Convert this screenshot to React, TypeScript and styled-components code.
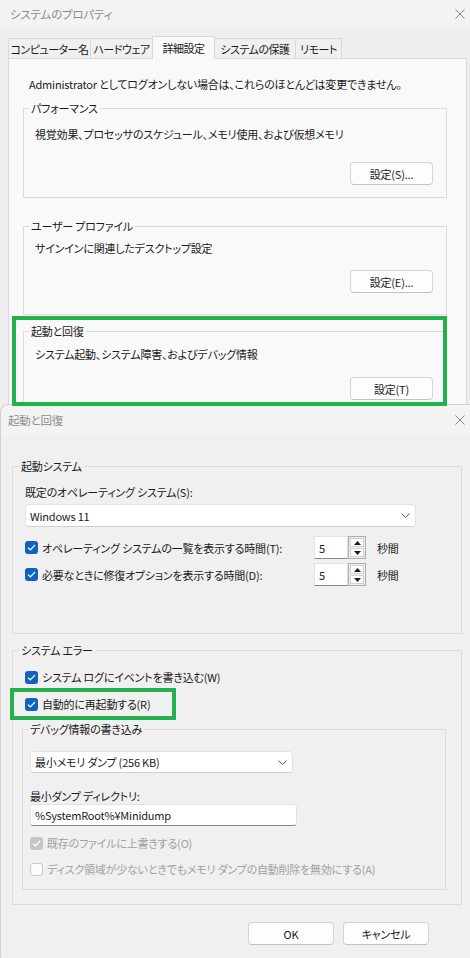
import React from 'react';
import styled, { createGlobalStyle, css } from 'styled-components';

const GREEN = '#22b14c';

const GlobalStyle = createGlobalStyle`
  html, body {
    margin: 0;
    padding: 0;
    background: #f0f0f0;
  }
  body {
    font-family: "Noto Sans CJK JP", "Noto Sans", sans-serif;
    font-size: 11px;
    letter-spacing: -0.2px;
    line-height: 16px;
    color: #1a1a1a;
    font-feature-settings: "palt";
  }
  *, *::before, *::after {
    box-sizing: border-box;
  }
`;

const Page = styled.div`
  width: 470px;
  height: 958px;
  overflow: hidden;
  display: flex;
  flex-direction: column;
`;

const Window = styled.section<{ $h: number; $framed?: boolean }>`
  flex: none;
  height: ${p => p.$h}px;
  background: #efefef;
  ${p =>
    p.$framed &&
    css`
      background: #f0f0f0;
      border-top: 1px solid #d2d2d2;
      border-left: 1px solid #d2d2d2;
      border-radius: 8px 0 0 8px;
      overflow: hidden;
    `}
`;

const TitleBar = styled.div<{ $h: number; $pl: number }>`
  height: ${p => p.$h}px;
  display: flex;
  align-items: center;
  justify-content: space-between;
  padding: 0 5px 0 ${p => p.$pl}px;
  background: #f3f3f3;
  color: #8c8c8c;
  font-size: 11.5px;
`;

const CloseIcon = () => (
  <svg width="10" height="10" viewBox="0 0 10 10">
    <path d="M0.5 0.5 L9.5 9.5 M9.5 0.5 L0.5 9.5" stroke="#8a8a8a" strokeWidth="1" fill="none" />
  </svg>
);

const TabStrip = styled.div`
  display: flex;
  align-items: flex-start;
  height: 22px;
  margin: 9px 0 0 8px;
`;

const Tab = styled.div<{ $active?: boolean; $w: number }>`
  position: relative;
  width: ${p => p.$w}px;
  height: ${p => (p.$active ? 23 : 20)}px;
  margin-top: ${p => (p.$active ? 0 : 2)}px;
  margin-left: -1px;
  &:first-child {
    margin-left: 0;
  }
  border: 1px solid #d9d9d9;
  border-bottom: none;
  background: ${p => (p.$active ? '#f9f9f9' : '#f0f0f0')};
  z-index: ${p => (p.$active ? 2 : 1)};
  display: flex;
  align-items: center;
  justify-content: center;
  white-space: nowrap;
  letter-spacing: -0.5px;
  padding-bottom: ${p => (p.$active ? 1 : 0)}px;
`;

const Panel = styled.div`
  margin-left: 8px;
  width: 459px;
  height: 370px;
  border: 1px solid #d9d9d9;
  background: #f9f9f9;
  padding-top: 17px;
`;

const Notice = styled.p`
  margin: 0;
  padding-left: 20px;
`;

const Group = styled.fieldset<{ $m: string }>`
  margin: ${p => p.$m};
  padding: 0;
  border: 1px solid #dcdcdc;
  min-width: 0;
`;

const Legend = styled.legend<{ $ml?: number }>`
  margin-left: ${p => p.$ml ?? 6}px;
  padding: 0 2px;
  line-height: 16px;
`;

const GroupBody = styled.div<{ $pad: string }>`
  padding: ${p => p.$pad};
  display: flex;
  flex-direction: column;
`;

const ButtonRow = styled.div<{ $mt: number }>`
  display: flex;
  justify-content: flex-end;
  margin-top: ${p => p.$mt}px;
`;

const PushButton = styled.button<{ $w: number }>`
  width: ${p => p.$w}px;
  height: 23px;
  padding: 0;
  font: inherit;
  letter-spacing: inherit;
  font-feature-settings: "palt";
  color: #1a1a1a;
  background: #fdfdfd;
  border: 1px solid #d4d4d4;
  border-bottom-color: #c2c2c2;
  border-radius: 4px;
`;

const Highlight = styled.div<{ $top: number; $left: number; $w: number; $h: number; $mt?: number }>`
  position: relative;
  margin-top: ${p => p.$mt ?? 0}px;
  &::after {
    content: '';
    position: absolute;
    top: ${p => p.$top}px;
    left: ${p => p.$left}px;
    width: ${p => p.$w}px;
    height: ${p => p.$h}px;
    border: 4px solid ${GREEN};
    pointer-events: none;
  }
`;

const DialogBody = styled.div`
  padding-top: 23px;
  display: flex;
  flex-direction: column;
`;

const FieldLabel = styled.div<{ $mt?: number }>`
  margin-top: ${p => p.$mt ?? 0}px;
`;

const Select = styled.div<{ $w: number; $h: number; $mt: number }>`
  width: ${p => p.$w}px;
  height: ${p => p.$h}px;
  margin-top: ${p => p.$mt}px;
  background: #fff;
  border: 1px solid #e3e3e3;
  border-bottom-color: #d0d0d0;
  border-radius: 4px;
  display: flex;
  align-items: center;
  justify-content: space-between;
  padding: 0 5px 0 4px;
`;

const Chevron = () => (
  <svg width="9" height="5" viewBox="0 0 9 5">
    <path d="M0.5 0.5 L4.5 4.5 L8.5 0.5" stroke="#5f5f5f" strokeWidth="1" fill="none" />
  </svg>
);

const TextInput = styled.div<{ $w: number }>`
  width: ${p => p.$w}px;
  height: 22px;
  background: #fff;
  border: 1px solid #e3e3e3;
  border-bottom-color: #868686;
  border-radius: 3px;
  padding-left: 4px;
  display: flex;
  align-items: center;
`;

const CheckRow = styled.div<{ $mt?: number; $ml?: number; $disabled?: boolean }>`
  display: flex;
  align-items: center;
  gap: 4px;
  height: 16px;
  margin-top: ${p => p.$mt ?? 0}px;
  margin-left: ${p => p.$ml ?? 0}px;
  color: ${p => (p.$disabled ? '#a0a0a0' : '#1a1a1a')};
`;

const Box = styled.span<{ $checked?: boolean; $disabled?: boolean }>`
  flex: none;
  width: 13px;
  height: 13px;
  border-radius: 3px;
  display: inline-flex;
  align-items: center;
  justify-content: center;
  ${p =>
    p.$checked
      ? css`
          background: ${p.$disabled ? '#c6c6c6' : '#0f62be'};
        `
      : css`
          background: #fbfbfb;
          border: 1px solid #c9c9c9;
        `}
`;

const Check = ({ checked, disabled }: { checked?: boolean; disabled?: boolean }) => (
  <Box $checked={checked} $disabled={disabled}>
    {checked && (
      <svg width="9" height="7" viewBox="0 0 9 7">
        <path d="M1 3.6 L3.3 5.8 L8 1" stroke="#fff" strokeWidth="1.2" fill="none" />
      </svg>
    )}
  </Box>
);

const TimeRow = styled.div<{ $mt: number }>`
  display: flex;
  align-items: center;
  height: 23px;
  margin-top: ${p => p.$mt}px;
`;

const TimeLabel = styled.div`
  width: 289px;
  display: flex;
  align-items: center;
  gap: 4px;
`;

const Spin = styled.div`
  display: flex;
  height: 23px;
`;

const SpinInput = styled.div`
  width: 34px;
  background: #fff;
  border: 1px solid #e3e3e3;
  border-bottom-color: #8b8b8b;
  padding-left: 4px;
  display: flex;
  align-items: center;
`;

const SpinButtons = styled.div`
  width: 18px;
  display: flex;
  flex-direction: column;
  gap: 1px;
  padding: 1px;
  border: 1px solid #acacac;
  background: #f0f0f0;
`;

const SpinButton = styled.div`
  flex: 1;
  display: flex;
  align-items: center;
  justify-content: center;
  background: #fdfdfd;
  border: 1px solid #d0d0d0;
`;

const Arrow = ({ up }: { up?: boolean }) => (
  <svg width="7" height="4" viewBox="0 0 7 4">
    <path d={up ? 'M0 4 L3.5 0 L7 4 Z' : 'M0 0 L7 0 L3.5 4 Z'} fill="#1a1a1a" />
  </svg>
);

const Unit = styled.span`
  margin-left: 11px;
`;

const Footer = styled.div`
  display: flex;
  justify-content: flex-end;
  gap: 9px;
  margin-top: 17px;
  padding-right: 41px;
`;

const Spinner = () => (
  <Spin>
    <SpinInput>5</SpinInput>
    <SpinButtons>
      <SpinButton>
        <Arrow up />
      </SpinButton>
      <SpinButton>
        <Arrow />
      </SpinButton>
    </SpinButtons>
  </Spin>
);

interface SettingProps {
  title: string;
  desc: string;
  button: string;
  margin: string;
  pt: number;
  gap: number;
  pb: number;
}

const SettingGroup = ({ title, desc, button, margin, pt, gap, pb }: SettingProps) => (
  <Group $m={margin}>
    <Legend $ml={5}>{title}</Legend>
    <GroupBody $pad={`${pt}px 13px ${pb}px 11px`}>
      <div>{desc}</div>
      <ButtonRow $mt={gap}>
        <PushButton $w={83}>{button}</PushButton>
      </ButtonRow>
    </GroupBody>
  </Group>
);

const App = () => {
  return (
    <Page>
      <GlobalStyle />
      <Window $h={404}>
        <TitleBar $h={27} $pl={10}>
          <span>システムのプロパティ</span>
          <CloseIcon />
        </TitleBar>
        <TabStrip>
          <Tab $w={83}>コンピューター名</Tab>
          <Tab $w={63}>ハードウェア</Tab>
          <Tab $w={63} $active>
            詳細設定
          </Tab>
          <Tab $w={82}>システムの保護</Tab>
          <Tab $w={47}>リモート</Tab>
        </TabStrip>
        <Panel>
          <Notice>Administrator としてログオンしない場合は、これらのほとんどは変更できません。</Notice>
          <SettingGroup
            title="パフォーマンス"
            desc="視覚効果、プロセッサのスケジュール、メモリ使用、および仮想メモリ"
            button="設定(S)..."
            margin="8px 19px 0 14px"
            pt={10}
            gap={20}
            pb={12}
          />
          <SettingGroup
            title="ユーザー プロファイル"
            desc="サインインに関連したデスクトップ設定"
            button="設定(E)..."
            margin="20px 19px 0 14px"
            pt={6}
            gap={14}
            pb={21}
          />
          <Highlight $mt={8} $top={-7} $left={3} $w={435} $h={90}>
            <SettingGroup
              title="起動と回復"
              desc="システム起動、システム障害、およびデバッグ情報"
              button="設定(T)"
              margin="0 19px 0 14px"
              pt={7}
              gap={15}
              pb={2}
            />
          </Highlight>
        </Panel>
      </Window>

      <Window $h={560} $framed>
        <TitleBar $h={30} $pl={7}>
          <span>起動と回復</span>
          <CloseIcon />
        </TitleBar>
        <DialogBody>
          <Group $m="0 8px 0 11px">
            <Legend>起動システム</Legend>
            <GroupBody $pad="10px 0 47px 12px">
              <FieldLabel>既定のオペレーティング システム(S):</FieldLabel>
              <Select $w={391} $h={23} $mt={4}>
                <span>Windows 11</span>
                <Chevron />
              </Select>
              <TimeRow $mt={9}>
                <TimeLabel>
                  <Check checked />
                  <span>オペレーティング システムの一覧を表示する時間(T):</span>
                </TimeLabel>
                <Spinner />
                <Unit>秒間</Unit>
              </TimeRow>
              <TimeRow $mt={4}>
                <TimeLabel>
                  <Check checked />
                  <span>必要なときに修復オプションを表示する時間(D):</span>
                </TimeLabel>
                <Spinner />
                <Unit>秒間</Unit>
              </TimeRow>
            </GroupBody>
          </Group>

          <Group $m="8px 8px 0 11px">
            <Legend>システム エラー</Legend>
            <GroupBody $pad="11px 15px 14px 9px">
              <CheckRow $ml={3}>
                <Check checked />
                <span>システム ログにイベントを書き込む(W)</span>
              </CheckRow>
              <Highlight $mt={11} $top={-8} $left={-12} $w={166} $h={32}>
                <CheckRow $ml={3}>
                  <Check checked />
                  <span>自動的に再起動する(R)</span>
                </CheckRow>
              </Highlight>
              <Group $m="9px 0 0 0">
                <Legend $ml={5}>デバッグ情報の書き込み</Legend>
                <GroupBody $pad="14px 0 12px 7px">
                  <Select $w={263} $h={22} $mt={0}>
                    <span>最小メモリ ダンプ (256 KB)</span>
                    <Chevron />
                  </Select>
                  <FieldLabel $mt={15}>最小ダンプ ディレクトリ:</FieldLabel>
                  <TextInput $w={267}>%SystemRoot%¥Minidump</TextInput>
                  <CheckRow $mt={9} $disabled>
                    <Check checked disabled />
                    <span>既存のファイルに上書きする(O)</span>
                  </CheckRow>
                  <CheckRow $mt={10} $disabled>
                    <Check disabled />
                    <span>ディスク領域が少ないときでもメモリ ダンプの自動削除を無効にする(A)</span>
                  </CheckRow>
                </GroupBody>
              </Group>
            </GroupBody>
          </Group>

          <Footer>
            <PushButton $w={86}>OK</PushButton>
            <PushButton $w={86}>キャンセル</PushButton>
          </Footer>
        </DialogBody>
      </Window>
    </Page>
  );
};

export default App;
